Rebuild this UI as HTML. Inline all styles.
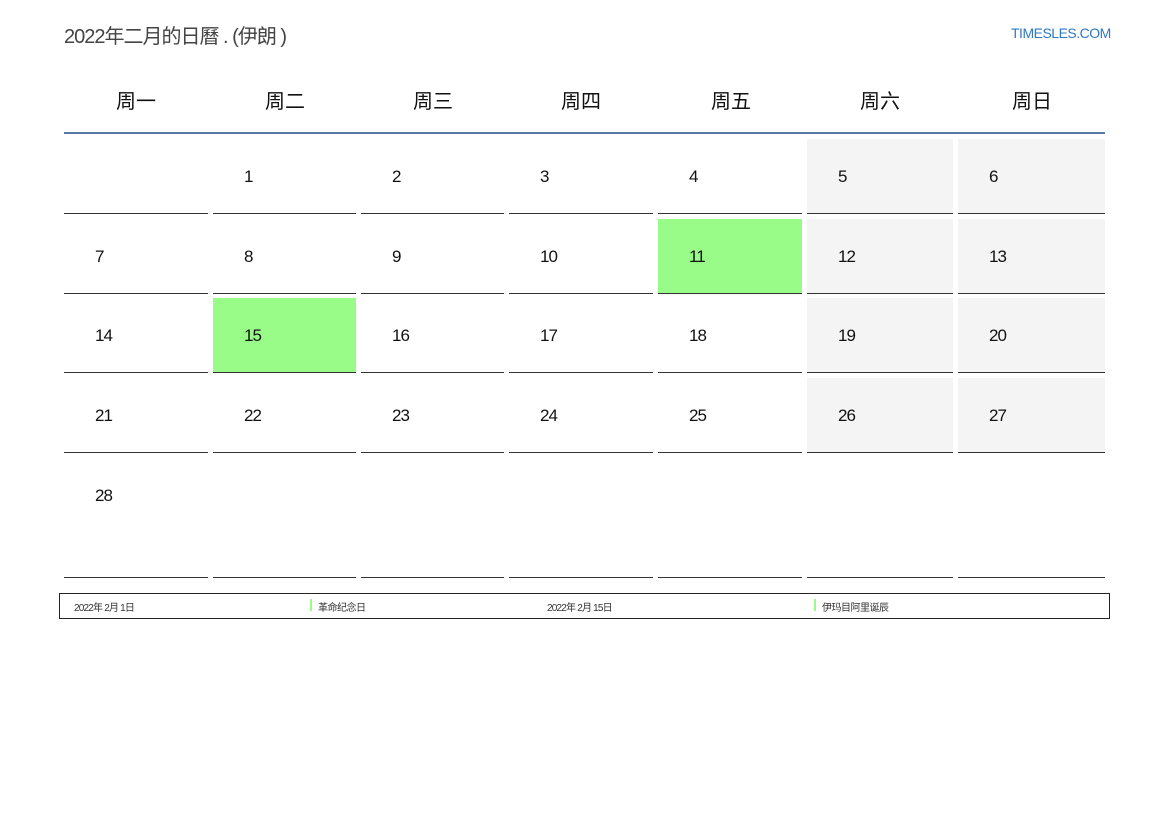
<!DOCTYPE html>
<html><head><meta charset="utf-8"><style>
body{margin:0;width:1169px;height:827px;background:#fff;position:relative;font-family:"Liberation Sans","Noto Sans CJK SC",sans-serif;color:#222;overflow:hidden}
.a{position:absolute}
.c{position:absolute;border-bottom:1px solid #333;box-sizing:border-box}
.n{position:absolute;font-size:17px;letter-spacing:-1px;color:#111}
.h{position:absolute;top:85px;font-size:20px;width:140px;text-align:center;color:#111}
</style></head><body>
<div class="a" style="left:64px;top:20px;font-size:20px;color:#444;letter-spacing:-1px">2022年二月的日曆 . (伊朗 )</div>
<div class="a" style="left:1011px;top:25px;font-size:14px;color:#2f78c4;letter-spacing:-0.5px">TIMESLES.COM</div>
<div class="h" style="left:66px">周一</div>
<div class="h" style="left:215px">周二</div>
<div class="h" style="left:363px">周三</div>
<div class="h" style="left:511px">周四</div>
<div class="h" style="left:661px">周五</div>
<div class="h" style="left:810px">周六</div>
<div class="h" style="left:962px">周日</div>
<div class="a" style="left:64px;top:132px;width:1041px;height:2px;background:#5a7aa6"></div>
<div id="g"></div>
<script>
var xs=[[64,208],[213,356],[361,504],[509,653],[658,802],[807,953],[958,1105]];
var ys=[[139,214],[219,294],[298,373],[378,453],[458,578]];
var g=document.getElementById('g'),h='';
for(var r=0;r<5;r++)for(var c=0;c<7;c++){
 var day=r*7+c;
 var bg='#fff';
 if(c>=5&&r<4)bg='#f4f4f4';
 if(day==11||day==15)bg='#99fb88';
 h+='<div class="c" style="left:'+xs[c][0]+'px;top:'+ys[r][0]+'px;width:'+(xs[c][1]-xs[c][0])+'px;height:'+(ys[r][1]-ys[r][0])+'px;background:'+bg+'"></div>';
 if(day>=1&&day<=28)h+='<div class="n" style="left:'+(xs[c][0]+31)+'px;top:'+(ys[r][0]+28)+'px">'+day+'</div>';
}
g.innerHTML=h;
</script>
<div class="a" style="left:59px;top:593px;width:1049px;height:24px;border:1px solid #222;font-size:10px;color:#333">
<span class="a" style="left:14px;top:5px;letter-spacing:-0.8px">2022年 2月 1日</span>
<span class="a" style="left:250px;top:5px;width:2px;height:12px;background:#99fb88"></span>
<span class="a" style="left:258px;top:5px;letter-spacing:-0.5px">革命纪念日</span>
<span class="a" style="left:487px;top:5px;letter-spacing:-0.8px">2022年 2月 15日</span>
<span class="a" style="left:754px;top:5px;width:2px;height:12px;background:#99fb88"></span>
<span class="a" style="left:762px;top:5px;letter-spacing:-0.5px">伊玛目阿里诞辰</span>
</div>
</body></html>
